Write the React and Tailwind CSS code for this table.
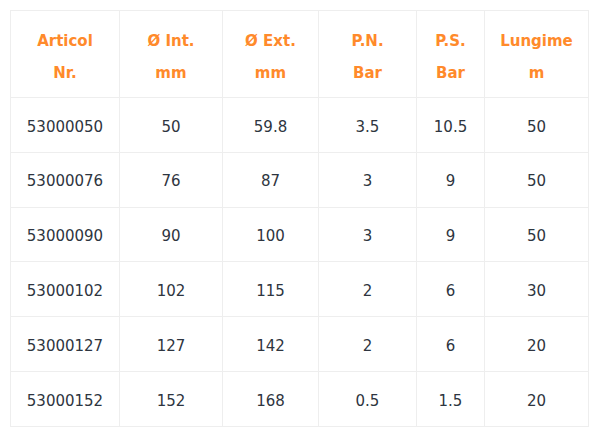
import React from "react";

const headers = [
  ["Articol", "Nr."],
  ["Ø Int.", "mm"],
  ["Ø Ext.", "mm"],
  ["P.N.", "Bar"],
  ["P.S.", "Bar"],
  ["Lungime", "m"],
];

const rows = [
  ["53000050", "50", "59.8", "3.5", "10.5", "50"],
  ["53000076", "76", "87", "3", "9", "50"],
  ["53000090", "90", "100", "3", "9", "50"],
  ["53000102", "102", "115", "2", "6", "30"],
  ["53000127", "127", "142", "2", "6", "20"],
  ["53000152", "152", "168", "0.5", "1.5", "20"],
];

const widths = ["w-[109px]", "w-[103px]", "w-[96px]", "w-[98px]", "w-[68px]", "w-[104px]"];

const App = () => {
  return (
    <div className="bg-white w-[600px] h-[432px] pt-[10px] pl-[10px] font-['DejaVu_Sans',sans-serif] text-[15px]">
      <table className="border-collapse table-fixed w-[579px]">
        <thead>
          <tr className="h-[87px]">
            {headers.map((h, i) => (
              <th
                key={i}
                className={`${widths[i]} border border-[#eeeeee] text-center font-bold text-[#ff8a2b] leading-[32px] px-0 pt-[6px]`}
              >
                {h[0]}
                <br />
                {h[1]}
              </th>
            ))}
          </tr>
        </thead>
        <tbody>
          {rows.map((r, ri) => (
            <tr key={ri} className="h-[54.8px]">
              {r.map((c, ci) => (
                <td key={ci} className="border border-[#eeeeee] text-center text-[#2e3540] pt-[4px]">
                  {c}
                </td>
              ))}
            </tr>
          ))}
        </tbody>
      </table>
    </div>
  );
};

export default App;
